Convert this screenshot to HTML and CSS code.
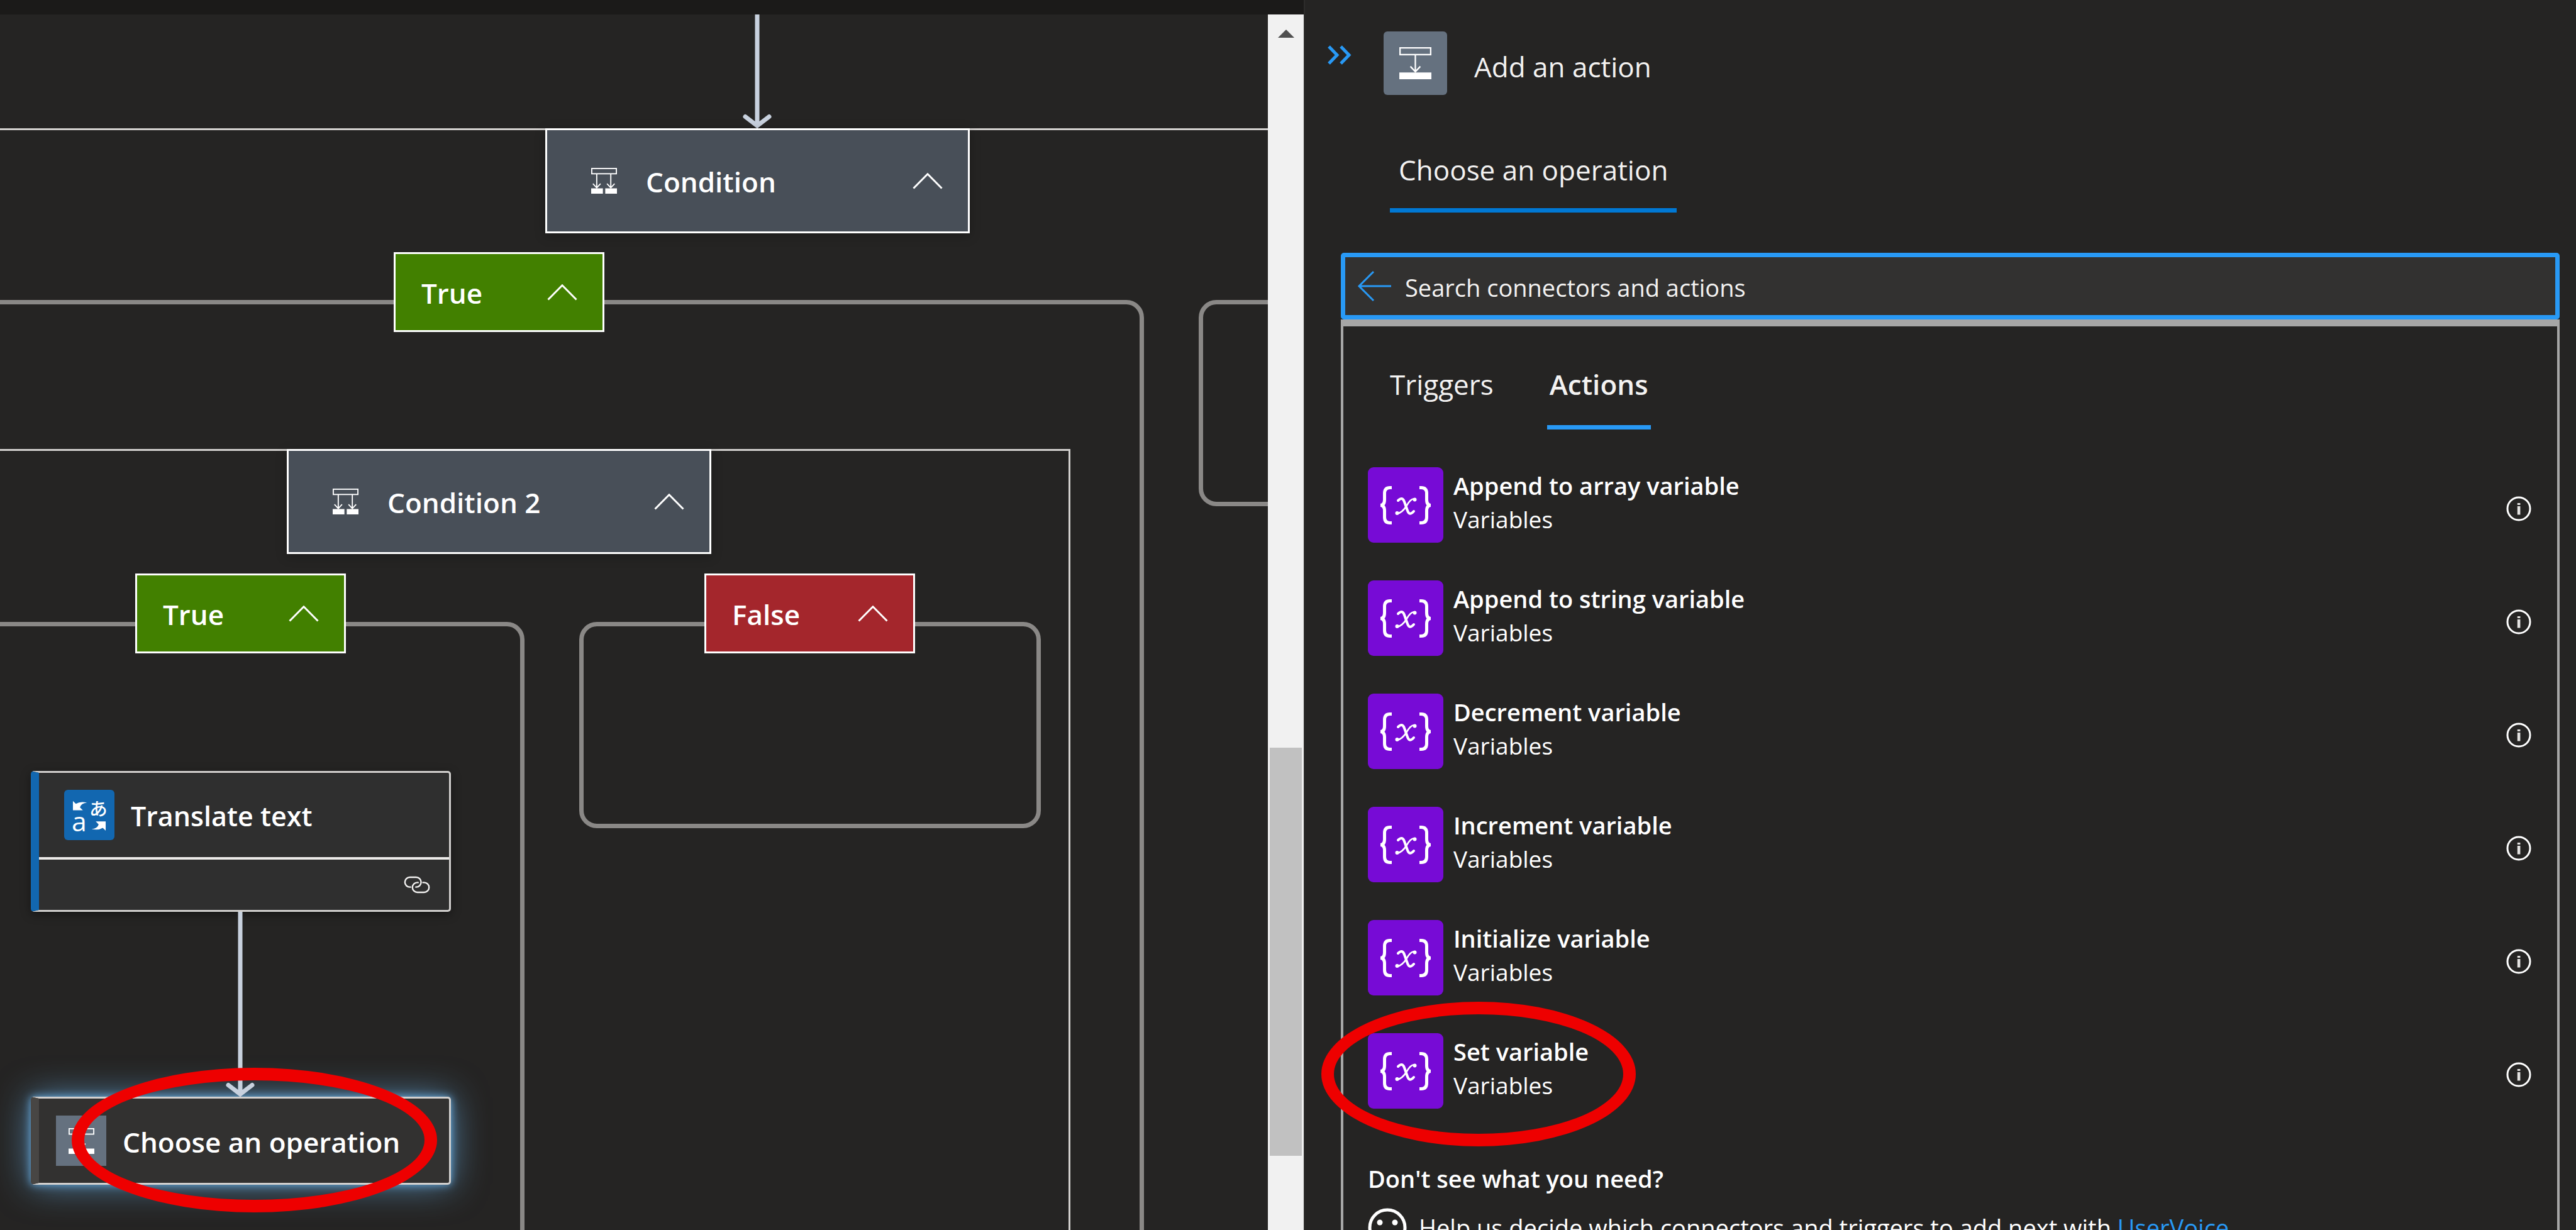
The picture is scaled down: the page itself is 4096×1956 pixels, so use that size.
FILE: index.html
```html
<!DOCTYPE html>
<html lang="en">
<head>
<meta charset="utf-8">
<title>Workflow designer</title>
<link rel="stylesheet" href="styles.css">
</head>
<body>
<svg class="defs" aria-hidden="true">
  <symbol id="i-chevron" viewBox="0 0 48 26"><path d="M1.500 24.500 24 1.800 46.500 24.500" fill="none" stroke="#fff" stroke-width="3"/></symbol>
  <symbol id="i-condition" viewBox="0 0 44 44">
    <g fill="none" stroke="#fff" stroke-width="2"><rect x="1" y="1" width="42" height="9"/><path d="M9.500 10V33M3 27l6.500 7 6.500-7M33.500 10V33M27 27l6.500 7 6.500-7"/></g>
    <path d="M0 35h20v9H0zM24 35h20v9H24z" fill="#fff"/>
  </symbol>
  <symbol id="i-action" viewBox="0 0 55 55">
    <g fill="none" stroke="#fff" stroke-width="2.500"><rect x="1.200" y="1.200" width="52.600" height="11.600"/><path d="M27.500 13V42M19 33l8.500 9 8.500-9"/></g>
    <path d="M0 43.500h55V55H0z" fill="#fff"/>
  </symbol>
  <symbol id="i-variable" viewBox="0 0 120 120">
    <g fill="none" stroke="#fff" stroke-width="5"><path d="M38 32.500h-3q-8.500 0-8.500 9v10q0 9-6.500 9 6.500 0 6.500 9v10q0 9 8.500 9h3"/><path d="M82 32.500h3q8.500 0 8.500 9v10q0 9 6.500 9-6.500 0-6.500 9v10q0 9-8.500 9h-3"/></g>
    <g fill="none" stroke="#fff" stroke-linecap="round"><path d="M48 53q7-7 10 2l5 14q3 9 10 1" stroke-width="4"/><path d="M75 50.500q-6-2-13 10T46 74" stroke-width="2.600"/></g>
    <circle cx="74.500" cy="51.500" r="3" fill="#fff"/><circle cx="46.500" cy="73" r="3" fill="#fff"/>
  </symbol>
  <symbol id="i-info" viewBox="0 0 40 40"><circle cx="20" cy="20" r="18" fill="none" stroke="#fff" stroke-width="3"/><path d="M17.800 11h4.600v3h-4.600zM17.800 16h4.600v13.500h-4.600z" fill="#e4e3e2"/></symbol>
</svg>

<div class="designer">
  <main class="workflow">
    <div class="topbar"></div>
    <div class="viewport">
      <div class="canvas">
        <div class="scope scope-outer"></div>
        <div class="branch branch-true"></div>
        <div class="branch branch-next"></div>
        <div class="scope scope-inner"></div>
        <div class="branch branch-true2"></div>
        <div class="branch branch-false"></div>

        <svg class="edge edge-in" viewBox="0 0 48 181"><path d="M24 0V176M5 162.500 24 177 43 162.500"/></svg>
        <svg class="edge edge-out" viewBox="0 0 48 294"><path d="M24 0V289M5 275.500 24 290 43 275.500"/></svg>

        <button class="node condition condition-1"><svg class="ico-cond"><use href="#i-condition"/></svg><span>Condition</span><svg class="chevron"><use href="#i-chevron"/></svg></button>
        <button class="node case yes case-true1"><span>True</span><svg class="chevron"><use href="#i-chevron"/></svg></button>
        <button class="node condition condition-2"><svg class="ico-cond"><use href="#i-condition"/></svg><span>Condition 2</span><svg class="chevron"><use href="#i-chevron"/></svg></button>
        <button class="node case yes case-true2"><span>True</span><svg class="chevron"><use href="#i-chevron"/></svg></button>
        <button class="node case no case-false"><span>False</span><svg class="chevron"><use href="#i-chevron"/></svg></button>

        <section class="card translate">
          <header class="card-head">
            <svg class="ico-translate" viewBox="0 0 86 86">
              <path d="M15 19l5 5q8-5 19-2-10 1-12 8l5 5H15z" fill="#fff"/>
              <path d="M71 70l-5-5q-8 5-19 2 10-1 12-8l-5-5h17z" fill="#fff"/>
              <text x="13" y="71" class="glyph-a">a</text>
              <text x="43" y="44" class="glyph-ja">あ</text>
            </svg>
            <span>Translate text</span>
          </header>
          <footer class="card-foot">
            <svg class="ico-link" viewBox="88 45 140 92"><path d="M124 103h-4a26 26 0 0 1 0-52h34a26 26 0 0 1 0 52h-2M190 79h6a26 26 0 0 1 0 52h-36a26 26 0 0 1 0-52h4"/></svg>
          </footer>
        </section>

        <section class="card choose">
          <header class="card-head">
            <span class="ico-box"><svg><use href="#i-action"/></svg></span>
            <span>Choose an operation</span>
          </header>
        </section>
        <div class="mark mark-node"></div>
      </div>
      <div class="scrollbar"><svg class="scroll-up" viewBox="0 0 26 13"><path d="M13 0 26 13H0z" fill="#505050"/></svg><div class="thumb"></div></div>
    </div>
  </main>

  <aside class="panel">
    <header class="panel-head">
      <button class="collapse" aria-label="Collapse panel"><svg viewBox="0 0 38 31"><path d="M2 2l13 13.500L2 29M21 2l13 13.500L21 29" fill="none" stroke="#2899f5" stroke-width="5"/></svg></button>
      <span class="panel-ico"><svg><use href="#i-action"/></svg></span>
      <h1>Add an action</h1>
    </header>
    <nav class="panel-tabs"><a class="panel-tab" href="#operation">Choose an operation</a></nav>

    <div class="picker" id="operation">
      <div class="search">
        <button class="back" aria-label="Back"><svg viewBox="0 0 54 50"><path d="M54 25H3M26 2 3 25 26 48" fill="none" stroke="#2899f5" stroke-width="3"/></svg></button>
        <input type="text" aria-label="Search connectors and actions" placeholder="Search connectors and actions">
      </div>
      <div class="results">
        <div class="tabs"><button class="tab">Triggers</button><button class="tab active">Actions</button></div>
        <ul class="actions">
          <li><button class="action"><svg class="tile"><use href="#i-variable"/></svg><span class="label"><b>Append to array variable</b><span>Variables</span></span></button><button class="info" aria-label="Details"><svg><use href="#i-info"/></svg></button></li>
          <li><button class="action"><svg class="tile"><use href="#i-variable"/></svg><span class="label"><b>Append to string variable</b><span>Variables</span></span></button><button class="info" aria-label="Details"><svg><use href="#i-info"/></svg></button></li>
          <li><button class="action"><svg class="tile"><use href="#i-variable"/></svg><span class="label"><b>Decrement variable</b><span>Variables</span></span></button><button class="info" aria-label="Details"><svg><use href="#i-info"/></svg></button></li>
          <li><button class="action"><svg class="tile"><use href="#i-variable"/></svg><span class="label"><b>Increment variable</b><span>Variables</span></span></button><button class="info" aria-label="Details"><svg><use href="#i-info"/></svg></button></li>
          <li><button class="action"><svg class="tile"><use href="#i-variable"/></svg><span class="label"><b>Initialize variable</b><span>Variables</span></span></button><button class="info" aria-label="Details"><svg><use href="#i-info"/></svg></button></li>
          <li><button class="action"><svg class="tile"><use href="#i-variable"/></svg><span class="label"><b>Set variable</b><span>Variables</span></span></button><button class="info" aria-label="Details"><svg><use href="#i-info"/></svg></button></li>
        </ul>
        <h2>Don't see what you need?</h2>
        <p class="feedback"><svg class="smiley" viewBox="0 0 62 62"><circle cx="31" cy="31" r="28" fill="none" stroke="#fff" stroke-width="5"/><circle cx="19" cy="23" r="4.500" fill="#fff"/><circle cx="43" cy="23" r="4.500" fill="#fff"/><path d="M16 40q15 14 30 0" fill="none" stroke="#fff" stroke-width="4"/></svg><span>Help us decide which connectors and triggers to add next with <a href="#uservoice">UserVoice</a></span></p>
      </div>
    </div>
    <div class="mark mark-action"></div>
  </aside>
</div>
</body>
</html>
```
FILE: styles.css
```css
* { box-sizing: border-box; }
body {
  margin: 0;
  background: #252423;
  color: #f3f2f1;
  font-family: "Open Sans", "Noto Sans", sans-serif;
}
button { margin: 0; padding: 0; border: 0; background: none; color: inherit; font: inherit; text-align: left; }
svg { display: block; flex: none; }
.defs { position: absolute; width: 0; height: 0; }

.designer { display: grid; grid-template-columns: 2073fr 2023fr; height: 100vh; overflow: hidden; }

/* Workflow canvas */
.workflow { display: flex; flex-direction: column; min-width: 0; min-height: 0; }
.topbar { height: 23px; flex: none; background: #1b1a19; }
.viewport { flex: 1; display: flex; min-height: 0; }
.canvas { position: relative; flex: 1; overflow: hidden; }
.scrollbar { width: 57px; background: #f1f1f1; display: flex; flex-direction: column; align-items: center; padding-top: 24px; }
.scroll-up { width: 26px; height: 13px; }
.thumb { width: 51px; height: 649px; margin-top: 1129px; background: #c1c1c1; }

.scope { position: absolute; border: 3px solid #d2d0ce; }
.scope-outer { top: 181px; left: -20px; right: -20px; bottom: -20px; }
.scope-inner { top: 691px; left: -20px; width: 1722px; bottom: -20px; }
.branch { position: absolute; border: 7px solid #8a8886; border-radius: 28px; }
.branch-true { top: 454px; left: -40px; width: 1859px; bottom: -40px; }
.branch-next { top: 454px; left: 1906px; width: 734px; height: 328px; }
.branch-true2 { top: 966px; left: -40px; width: 874px; bottom: -40px; }
.branch-false { top: 966px; left: 921px; width: 734px; height: 328px; }

.edge { position: absolute; width: 48px; fill: none; stroke: #c8d1de; stroke-width: 7; stroke-linecap: round; }
.edge-in { top: 0; left: 1180px; height: 181px; }
.edge-out { top: 1427px; left: 358px; height: 294px; z-index: 2; }

.node {
  position: absolute; display: flex; align-items: center;
  border: 3px solid #fff; color: #fff;
  font-size: 44px; line-height: 60px; font-weight: 600;
}
.node span, .card-head > span:last-child { padding-top: 3px; }
.condition { width: 675px; height: 167px; padding: 0 40px 0 70px; gap: 46px; background: #484f58; box-shadow: 0 4px 16px rgba(0, 0, 0, .25); }
.condition-1 { top: 181px; left: 867px; }
.condition-2 { top: 691px; left: 456px; }
.case { width: 335px; height: 127px; padding: 0 40px 0 41px; }
.case-true1 { top: 378px; left: 626px; }
.case-true2 { top: 889px; left: 215px; }
.case-false { top: 889px; left: 1120px; }
.yes { background: #428000; }
.no { background: #a4262c; }
.ico-cond { width: 41px; height: 41px; }
.chevron { width: 48px; height: 26px; margin-left: auto; }

.card {
  position: absolute; left: 49px; width: 668px;
  border: 3px solid #d2d0ce; border-left: 13px solid; border-radius: 5px;
  background: #2f2f2f; color: #fff;
  font-size: 44px; line-height: 60px; font-weight: 600;
}
.card-head { display: flex; align-items: center; gap: 26px; height: 134px; }
.translate { top: 1203px; border-left-color: #1267b0; box-shadow: 0 4px 16px rgba(0, 0, 0, .4); }
.translate .card-head { padding-left: 40px; font-size: 43px; }
.card-foot { height: 84px; border-top: 4px solid #edebe9; display: flex; align-items: center; justify-content: flex-end; padding-right: 30px; }
.choose { top: 1721px; border-left-color: #484644; background: #323130; box-shadow: 0 0 14px #69afe5, 0 0 56px rgba(105, 175, 229, .7); }
.choose .card-head { padding-left: 27px; }
.ico-translate { width: 80px; height: 80px; border-radius: 6px; background: #1267b0; }
.glyph-a { font: 400 46px "Open Sans", sans-serif; fill: #fff; }
.glyph-ja { font: 500 31px "Noto Sans CJK JP", sans-serif; fill: #fff; }
.ico-link { width: 42px; height: 28px; fill: none; stroke: #f3f2f1; stroke-width: 8; stroke-linecap: round; }
.ico-box { display: flex; align-items: center; justify-content: center; width: 80px; height: 80px; background: #65717f; }
.ico-box svg { width: 41px; height: 41px; }

.mark { position: absolute; border: 20px solid #ee0000; border-radius: 50%; pointer-events: none; z-index: 3; }
.mark-node { top: 1675px; left: 114px; width: 581px; height: 230px; }
.mark-action { top: 1593px; left: 26px; width: 500px; height: 230px; }

/* Action panel */
.panel { position: relative; display: flex; flex-direction: column; min-width: 0; border-left: 2px solid #2d2c2b; }
.panel-head { display: flex; align-items: flex-start; padding: 50px 0 0 36px; }
.collapse { padding-top: 22px; width: 89px; }
.collapse svg { width: 38px; height: 31px; }
.panel-ico { display: flex; align-items: center; justify-content: center; width: 101px; height: 101px; border-radius: 6px; background: #65717f; }
.panel-ico svg { width: 51px; height: 51px; }
h1 { margin: 26px 0 0 43px; font-size: 44px; line-height: 60px; font-weight: 400; }
.panel-tabs { display: flex; padding: 88px 0 0 135px; }
.panel-tab { padding: 0 14px 30px; border-bottom: 7px solid #0078d4; color: inherit; text-decoration: none; font-size: 44px; line-height: 62px; }

.picker { flex: 1; display: flex; flex-direction: column; margin: 64px 26px 0 57px; min-height: 0; }
.search { display: flex; align-items: center; height: 106px; flex: none; border: 7px solid #2899f5; border-radius: 5px; background: #323130; }
.back { padding: 0 22px 0 19px; }
.back svg { width: 54px; height: 50px; }
.search input { flex: 1; min-width: 0; height: 60px; margin: 0; padding: 4px 0 0; border: 0; outline: 0; background: none; color: inherit; font: inherit; font-size: 38px; }
.search input::placeholder { color: #f3f2f1; opacity: 1; }
.results { flex: none; border: 4px solid #a6a6a6; border-top-width: 11px; padding: 61px 41px 0 39px; }
.tabs { display: flex; gap: 85px; padding-left: 35px; }
.tab { font-size: 44px; line-height: 62px; padding-bottom: 34px; border-bottom: 7px solid transparent; }
.tab.active { font-weight: 600; border-color: #2899f5; padding-left: 4px; padding-right: 4px; }
.actions { list-style: none; margin: 60px 0 0; padding: 0; display: grid; gap: 60px; }
.actions li { display: flex; align-items: center; }
.action { flex: 1; display: flex; align-items: center; gap: 16px; }
.tile { width: 120px; height: 120px; border-radius: 9px; background: #770bd6; }
.label { display: grid; font-size: 37px; line-height: 53px; padding-bottom: 8px; color: #fff; }
.label b { font-size: 38px; font-weight: 600; }
.info { padding-top: 12px; }
.info svg { width: 40px; height: 40px; }
h2 { margin: 84px 0 0; font-size: 38px; line-height: 54px; font-weight: 600; color: #fff; }
.feedback { display: flex; align-items: center; gap: 19px; margin: 20px 0 0; font-size: 38px; line-height: 54px; color: #fff; }
.smiley { width: 62px; height: 62px; }
.feedback a { color: #2899f5; text-decoration: none; }
```
